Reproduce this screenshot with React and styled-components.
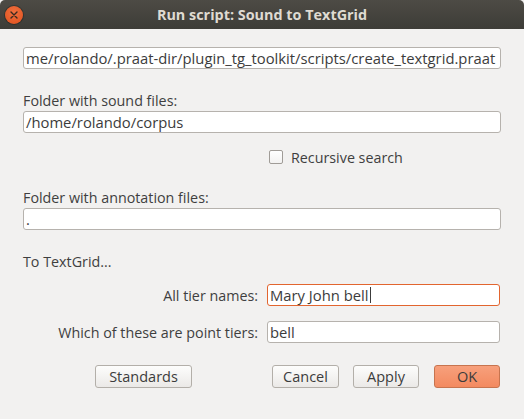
import React from 'react';
import styled, { createGlobalStyle } from 'styled-components';

const Global = createGlobalStyle`
  html, body { margin: 0; padding: 0; background: #f2f1f0; }
  body { font-family: 'Open Sans', 'DejaVu Sans', sans-serif; }
`;

const Window = styled.div`
  width: 524px;
  height: 419px;
  display: flex;
  flex-direction: column;
  background: #f2f1f0;
  overflow: hidden;
`;

const TitleBar = styled.div`
  height: 29px;
  flex: none;
  position: relative;
  display: flex;
  align-items: center;
  justify-content: center;
  background: linear-gradient(#4d4b45, #3d3c37);
  border-radius: 5px 5px 0 0;
  color: #dfdbd2;
  font-weight: bold;
  font-size: 14.4px;
`;

const CloseButton = styled.div`
  position: absolute;
  left: 5px;
  top: 6px;
  width: 18px;
  height: 18px;
  border-radius: 50%;
  background: radial-gradient(circle at 50% 35%, #f0703f, #e0501c);
  box-shadow: 0 0 0 1px rgba(0, 0, 0, 0.25);
  display: flex;
  align-items: center;
  justify-content: center;
`;

const Body = styled.div`
  display: flex;
  flex-direction: column;
  padding: 18px 23px 0 23px;
  color: #3f3f3f;
  font-size: 14.3px;
`;

const Field = styled.div`
  height: 22px;
  box-sizing: border-box;
  background: #fff;
  border: 1px solid ${(p) => (p.focused ? '#e2652f' : '#b6b2ad')};
  border-radius: 3px;
  display: flex;
  align-items: center;
  padding: 0 3px 0 2px;
  overflow: hidden;
  white-space: nowrap;
  color: #3c3c3c;
  font-size: 14.8px;
`;

const Caret = styled.span`
  display: inline-block;
  width: 1px;
  height: 16px;
  background: #3c3c3c;
  margin-left: 1px;
`;

const Label = styled.div`
  height: 16px;
  line-height: 16px;
  margin-top: ${(p) => p.top}px;
  margin-bottom: 2px;
`;

const CheckRow = styled.label`
  display: flex;
  align-items: center;
  gap: 8px;
  margin: 16px 0 0 246px;
  height: 16px;
`;

const Box = styled.span`
  width: 12px;
  height: 12px;
  border: 1px solid #a09c97;
  border-radius: 2px;
  background: linear-gradient(#ffffff, #f3f2f1);
`;

const Row = styled.div`
  display: grid;
  grid-template-columns: 235px 233px;
  column-gap: 9px;
  align-items: center;
  margin-top: ${(p) => p.top}px;
`;

const RowLabel = styled.div`
  text-align: right;
`;

const Buttons = styled.div`
  display: flex;
  align-items: center;
  margin-top: 22px;
  padding-left: 72px;
`;

const Button = styled.div`
  height: 23px;
  box-sizing: border-box;
  width: ${(p) => p.w}px;
  margin-left: ${(p) => p.ml || 0}px;
  border: 1px solid ${(p) => (p.primary ? '#c7744f' : '#b3afa9')};
  border-radius: 3px;
  background: ${(p) =>
    p.primary
      ? 'linear-gradient(#f7a07c, #f38a60)'
      : 'linear-gradient(#fdfdfc, #ebe9e7)'};
  display: flex;
  align-items: center;
  justify-content: center;
  font-size: 14.5px;
  color: #3c3c3c;
`;

export default function App() {
  return (
    <>
      <Global />
      <Window>
        <TitleBar>
          <CloseButton>
            <svg width="8" height="8" viewBox="0 0 8 8">
              <path d="M1 1 L7 7 M7 1 L1 7" stroke="#3a2a20" strokeWidth="1.4" strokeLinecap="round" />
            </svg>
          </CloseButton>
          Run script: Sound to TextGrid
        </TitleBar>
        <Body>
          <Field>me/rolando/.praat-dir/plugin_tg_toolkit/scripts/create_textgrid.praat</Field>
          <Label top={24}>Folder with sound files:</Label>
          <Field>/home/rolando/corpus</Field>
          <CheckRow>
            <Box />
            Recursive search
          </CheckRow>
          <Label top={25}>Folder with annotation files:</Label>
          <Field>.</Field>
          <Label top={24}>To TextGrid...</Label>
          <Row top={12}>
            <RowLabel>All tier names:</RowLabel>
            <Field focused>
              Mary John bell
              <Caret />
            </Field>
          </Row>
          <Row top={15}>
            <RowLabel>Which of these are point tiers:</RowLabel>
            <Field>bell</Field>
          </Row>
          <Buttons>
            <Button w={97}>Standards</Button>
            <Button w={67} ml={80}>Cancel</Button>
            <Button w={66} ml={14}>Apply</Button>
            <Button w={66} ml={15} primary>OK</Button>
          </Buttons>
        </Body>
      </Window>
    </>
  );
}
